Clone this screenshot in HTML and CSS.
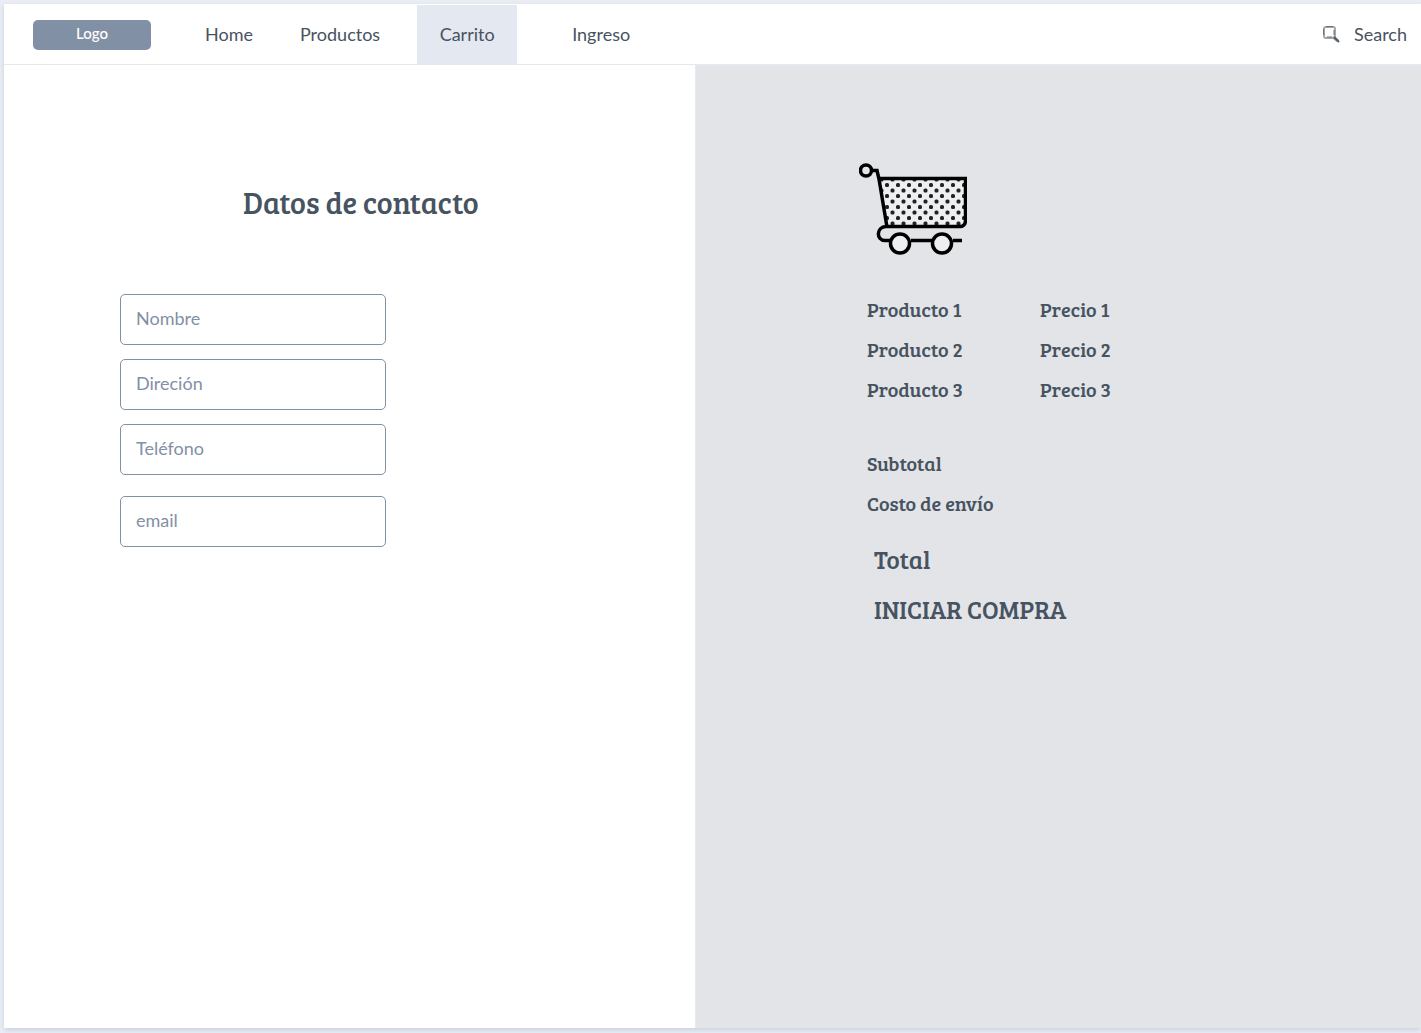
FILE: index.html
```html
<!DOCTYPE html>
<html lang="es">
<head>
<meta charset="utf-8">
<meta name="viewport" content="width=device-width, initial-scale=1">
<title>Carrito</title>
<link rel="stylesheet" href="styles.css">
</head>
<body>
<div class="board">
  <header class="topbar">
    <a class="logo" href="#">Logo</a>
    <nav class="nav">
      <a class="nav-link" href="#">Home</a>
      <a class="nav-link" href="#">Productos</a>
      <a class="nav-link active" href="#" aria-current="page">Carrito</a>
      <a class="nav-link last" href="#">Ingreso</a>
    </nav>
    <button class="search" type="button">
      <svg class="search-icon" width="18" height="18" viewBox="0 0 18 18" fill="none" aria-hidden="true">
        <rect x="2" y="2" width="11" height="11" rx="2" stroke="#a3a7ad" stroke-width="2"/>
        <path d="M4 1.500h7M1.500 4v6M12 5v5M5 12h5" stroke="#6b7078" stroke-width="1"/>
        <path d="M11 12l5 4" stroke="#a0a4aa" stroke-width="3"/>
        <path d="M12 12l5 5" stroke="#555a62" stroke-width="2"/>
      </svg>
      Search
    </button>
  </header>
  <main class="columns">
    <section class="contact">
      <h1 class="title">Datos de contacto</h1>
      <form class="form">
        <input class="field" type="text" placeholder="Nombre" aria-label="Nombre">
        <input class="field" type="text" placeholder="Direción" aria-label="Direción">
        <input class="field" type="tel" placeholder="Teléfono" aria-label="Teléfono">
        <input class="field email" type="email" placeholder="email" aria-label="email">
      </form>
    </section>
    <section class="summary">
      <svg class="cart" width="108" height="92" viewBox="0 0 108 92" fill="none" stroke="#000" aria-hidden="true">
        <defs>
          <pattern id="mesh" x="26" y="19" width="11" height="11" patternUnits="userSpaceOnUse">
            <rect x="0" y="1" width="4" height="4" rx="1.500" fill="#222" stroke="none"/>
            <rect x="5.500" y="6.500" width="4" height="4" rx="1.500" fill="#222" stroke="none"/>
          </pattern>
        </defs>
        <path d="M20 16H107V62Q107 64 104 64H28Z" fill="#eeeff1" stroke="none"/>
        <path d="M20 16H107V62Q107 64 104 64H28Z" fill="url(#mesh)" stroke="none"/>
        <circle cx="7" cy="7.500" r="5.500" stroke-width="3.500"/>
        <path d="M13 7.500H18L20 16L28 64" stroke-width="3.500"/>
        <path d="M19 15.500H106.500V58Q106 63.500 101 63.500H27C17 64 17 77.500 26 77.500H31M52 77.500H73M94 77.500H103" stroke-width="3.500"/>
        <circle cx="41" cy="80.500" r="9.500" fill="#eeeff1" stroke-width="3.500"/>
        <circle cx="83" cy="80.500" r="9.500" fill="#eeeff1" stroke-width="3.500"/>
      </svg>
      <table class="items">
        <tbody>
          <tr><td class="product">Producto 1</td><td>Precio 1</td></tr>
          <tr><td class="product">Producto 2</td><td>Precio 2</td></tr>
          <tr><td class="product">Producto 3</td><td>Precio 3</td></tr>
        </tbody>
      </table>
      <p class="line">Subtotal</p>
      <p class="line">Costo de envío</p>
      <div class="checkout">
        <p class="total">Total</p>
        <button class="buy" type="button">INICIAR COMPRA</button>
      </div>
    </section>
  </main>
</div>
</body>
</html>
```
FILE: styles.css
```css
* {
  box-sizing: border-box;
}

body {
  margin: 0;
  padding: 4px 0 5px 4px;
  min-height: 100vh;
  display: flex;
  background: #eceff5;
  color: #475360;
  font-family: Lato, sans-serif;
  font-size: 18px;
}

.board {
  flex: 1;
  display: flex;
  flex-direction: column;
  background: #fff;
  box-shadow: 0 2px 6px rgba(110, 130, 160, 0.3);
}

.topbar {
  height: 61px;
  display: flex;
  align-items: center;
  padding: 1px 14px 0 29px;
  border-bottom: 1px solid #e3e8f1;
}

.logo {
  width: 118px;
  height: 30px;
  border-radius: 5px;
  background: #8290a6;
  color: #fff;
  font-size: 15px;
  font-weight: 500;
  line-height: 27px;
  text-align: center;
  text-decoration: none;
}

.nav {
  align-self: stretch;
  display: flex;
  flex: 1;
  padding-left: 54px;
}

.nav-link {
  margin-right: 47px;
  color: inherit;
  line-height: 59px;
  text-decoration: none;
}

.nav-link.active {
  width: 100px;
  margin: 0 55px 0 -10px;
  background: #e4e8f1;
  text-align: center;
}

.nav-link.last {
  margin-right: 0;
}

.search {
  display: flex;
  align-items: center;
  gap: 14px;
  padding: 0 0 2px;
  border: 0;
  background: none;
  color: inherit;
  font: inherit;
}

.columns {
  flex: 1;
  display: grid;
  grid-template-columns: 691fr 726fr;
}

.contact {
  padding: 117px 24px 24px 116px;
}

.title {
  margin: 0 0 72px 123px;
  font-family: "Bree Serif", "DejaVu Serif Condensed", "DejaVu Serif", serif;
  font-size: 30px;
  font-weight: 400;
  line-height: 40px;
}

.form {
  display: flex;
  flex-direction: column;
  gap: 14px;
  width: 266px;
}

.field {
  width: 100%;
  height: 51px;
  padding: 0 15px 3px;
  border: 1px solid #8290a6;
  border-radius: 5px;
  background: #fff;
  color: #475360;
  font: inherit;
}

.field::placeholder {
  color: #8290a6;
  opacity: 1;
}

.field.email {
  margin-top: 7px;
}

.summary {
  padding: 97px 24px 24px 163px;
  border: solid #e6eaf2;
  border-width: 1px 0 0 1px;
  background: #e3e4e8;
  font-family: "Bree Serif", "DejaVu Serif Condensed", "DejaVu Serif", serif;
  font-size: 20px;
}

.cart {
  display: block;
}

.items {
  margin: 34px 0 34px 8px;
  border-collapse: collapse;
  line-height: 40px;
}

.items td {
  padding: 0;
}

.items .product {
  width: 173px;
}

.line {
  margin: 0 0 0 8px;
  line-height: 40px;
}

.checkout {
  display: flex;
  flex-direction: column;
  align-items: flex-start;
  margin: 11px 0 0 15px;
  font-size: 25px;
  line-height: 50px;
}

.total {
  margin: 0;
}

.buy {
  padding: 0;
  border: 0;
  background: none;
  color: inherit;
  font: inherit;
}
```
